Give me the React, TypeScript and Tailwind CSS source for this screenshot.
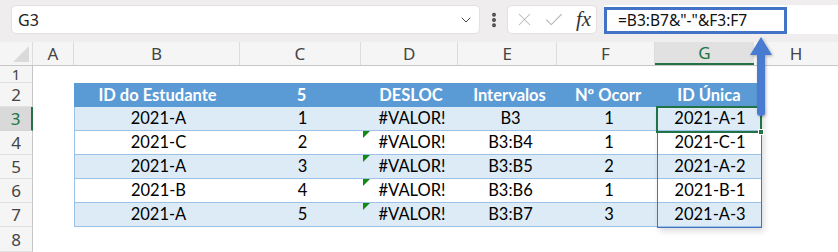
import React from "react";
import { ChevronDown, EllipsisVertical, X, Check } from "lucide-react";

const rows = [
  ["2021-A", "1", "#VALOR!", "B3", "1", "2021-A-1"],
  ["2021-C", "2", "#VALOR!", "B3:B4", "1", "2021-C-1"],
  ["2021-A", "3", "#VALOR!", "B3:B5", "2", "2021-A-2"],
  ["2021-B", "4", "#VALOR!", "B3:B6", "1", "2021-B-1"],
  ["2021-A", "5", "#VALOR!", "B3:B7", "3", "2021-A-3"],
];

const widths = ["w-[167px]", "w-[121px]", "w-[98px]", "w-[99px]", "w-[98px]", "w-[104px]"];

const RowNum = ({ n, active }: { n: number; active?: boolean }) => (
  <div
    className={
      active
        ? "w-[33px] shrink-0 h-full leading-none flex items-center justify-center bg-[#d9d9d9] border-r-2 border-[#217346] border-b border-b-[#d4d4d4] text-[#217346]"
        : "w-[33px] shrink-0 h-full leading-none flex items-center justify-center bg-[#f5f5f5] border-r border-[#c6c6c6] border-b border-b-[#e1e1e1] text-[#444]"
    }
  >
    {n}
  </div>
);

const App = () => {
  return (
    <div className="w-[838px] h-[252px] bg-white relative overflow-hidden font-['Lato',sans-serif]">
      {/* formula bar */}
      <div className="h-[42px] bg-[#efeded] flex items-start pt-[5px] font-['Noto_Sans',sans-serif]">
        <div className="ml-[11px] w-[469px] h-[29px] bg-white rounded-[5px] border border-[#e3e0e0] flex items-center justify-between pl-[6px] pr-[5px] text-[16px] text-[#222]">
          <span>G3</span>
          <ChevronDown size={16} strokeWidth={1.5} className="text-[#444]" />
        </div>
        <div className="w-[27px] h-[29px] flex items-center justify-center">
          <EllipsisVertical size={18} strokeWidth={3.2} className="text-[#444]" />
        </div>
        <div className="w-[90px] h-[29px] bg-white rounded-[5px] border border-[#e3e0e0] flex items-center pl-[6px] gap-[8px]">
          <X size={21} strokeWidth={1.2} className="text-[#b9b9b9]" />
          <Check size={22} strokeWidth={1.2} className="text-[#b9b9b9]" />
          <span className="ml-[3px] font-['Liberation_Serif',serif] italic text-[21px] text-[#333] leading-none">fx</span>
        </div>
        <div className="ml-[7px] flex-1 h-[29px] bg-white pt-[2px]">
          <div className="w-[183px] h-[27px] border-[3px] border-[#4472c4] flex items-center pl-[11px] text-[15.5px] text-[#111]">
            =B3:B7&amp;"-"&amp;F3:F7
          </div>
        </div>
      </div>

      {/* column headers */}
      <div className="h-[24px] flex bg-[#f5f5f5] border-b border-[#c6c6c6] text-[17px] text-[#444] font-['Noto_Sans',sans-serif]">
        <div className="w-[33px] shrink-0 relative border-r border-[#dcdcdc]">
          <div className="absolute right-[3px] bottom-[3px] w-0 h-0 border-l-[16px] border-l-transparent border-b-[16px] border-b-[#dadada]" />
        </div>
        <div className="w-[41px] flex items-center justify-center border-r border-[#dcdcdc]">A</div>
        <div className="w-[167px] flex items-center justify-center border-r border-[#dcdcdc]">B</div>
        <div className="w-[121px] flex items-center justify-center border-r border-[#dcdcdc]">C</div>
        <div className="w-[98px] flex items-center justify-center border-r border-[#dcdcdc]">D</div>
        <div className="w-[99px] flex items-center justify-center border-r border-[#dcdcdc]">E</div>
        <div className="w-[98px] flex items-center justify-center border-r border-[#dcdcdc]">F</div>
        <div className="w-[100px] flex items-center justify-center bg-[#e1e1e1] border-b-2 border-[#217346] text-[#217346]">G</div>
        <div className="w-[84px] flex items-center justify-center">H</div>
      </div>

      {/* sheet rows */}
      <div className="text-[17px] font-['Noto_Sans',sans-serif]">
        <div className="h-[17px] flex text-[15px]">
          <RowNum n={1} />
        </div>
        <div className="h-[24px] flex">
          <RowNum n={2} />
          <div className="w-[41px]" />
          <div className="flex bg-[#5b9bd5] text-white font-bold font-['Lato',sans-serif] text-[16.5px]">
            {["ID do Estudante", "5", "DESLOC", "Intervalos", "Nº Ocorr", "ID Única"].map((h, i) => (
              <div key={i} className={`${widths[i]} flex items-center justify-center`}>
                {h}
              </div>
            ))}
          </div>
        </div>
        {rows.map((r, ri) => (
          <div key={ri} className="h-[24px] flex">
            <RowNum n={ri + 3} active={ri === 0} />
            <div className="w-[41px]" />
            <div
              className={`flex border-b border-l border-[#9bc2e6] font-['Lato',sans-serif] text-[16.5px] text-black ${
                ri % 2 === 0 ? "bg-[#ddebf7]" : "bg-white"
              }`}
            >
              {r.map((c, ci) => (
                <div key={ci} className={`${widths[ci]} relative flex items-center justify-center`}>
                  {ci === 2 && ri > 0 && (
                    <div className="absolute left-0 top-0 w-0 h-0 border-t-[7px] border-t-[#138a13] border-r-[7px] border-r-transparent" />
                  )}
                  {c}
                </div>
              ))}
            </div>
          </div>
        ))}
        <div className="h-[25px] flex">
          <RowNum n={8} />
        </div>
      </div>

      {/* spill range + selection */}
      <div className="absolute left-[657px] top-[107px] w-[105px] h-[121px] border border-[#4472c4] shadow-[2px_3px_6px_rgba(0,0,0,0.15)]" />
      <div className="absolute left-[656px] top-[106px] w-[106px] h-[27px] border-2 border-[#217346]" />
      <div className="absolute left-[758px] top-[129px] w-[6px] h-[6px] bg-[#217346] border border-white" />

      {/* arrow */}
      <svg className="absolute left-[744px] top-[33px]" width="34" height="88" viewBox="0 0 34 88">
        <defs>
          <filter id="sh" x="-50%" y="-20%" width="200%" height="140%">
            <feDropShadow dx="1" dy="1" stdDeviation="1.5" floodColor="#000" floodOpacity="0.3" />
          </filter>
        </defs>
        <path
          d="M17 4 L28 22 L21 22 L21 80 Q21 83 17 83 Q13 83 13 80 L13 22 L6 22 Z"
          fill="#4a7bd0"
          filter="url(#sh)"
        />
      </svg>
    </div>
  );
};

export default App;
